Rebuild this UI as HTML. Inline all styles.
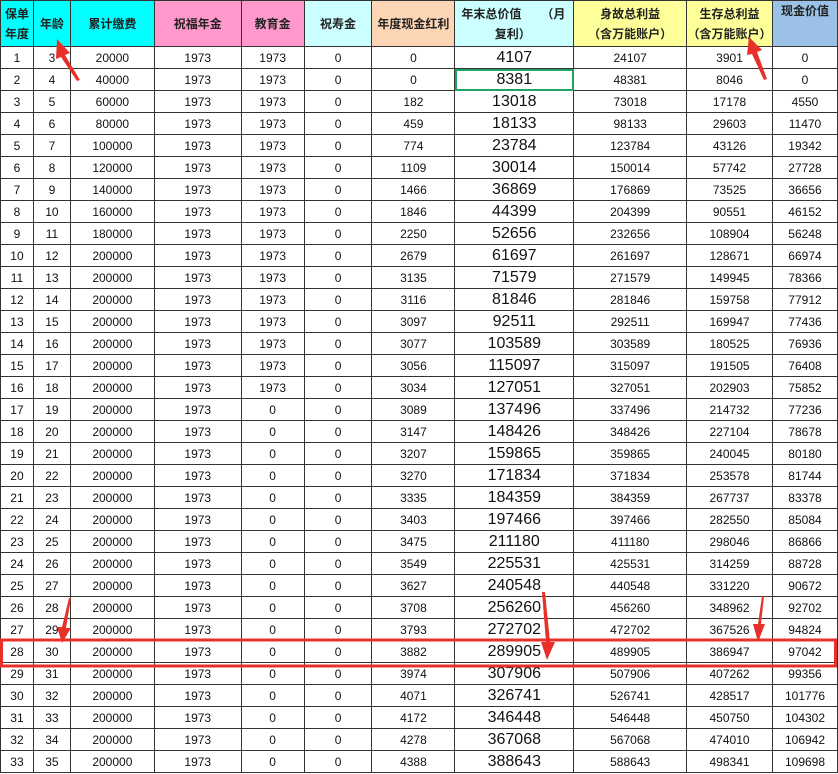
<!DOCTYPE html>
<html><head><meta charset="utf-8"><style>
body{margin:0;width:838px;height:774px;overflow:hidden;background:#fff;font-family:"Liberation Sans","Noto Sans CJK SC",sans-serif;position:relative}
table{border-collapse:collapse;table-layout:fixed;position:absolute;left:0;top:0}
td{border:1px solid #333;height:21px;padding:0;text-align:center;font-size:12px;color:#111;white-space:nowrap;overflow:hidden}
th{border:1px solid #333;height:45px;padding:0;font-size:12px;font-weight:bold;color:#222;line-height:20px}
td.b{font-size:16px}
</style></head><body>
<table>
<colgroup><col style="width:33px"><col style="width:37px"><col style="width:84px"><col style="width:87px"><col style="width:63px"><col style="width:68px"><col style="width:83px"><col style="width:119px"><col style="width:113px"><col style="width:86px"><col style="width:65px"></colgroup>
<tr>
<th style="background:#00ffff">保单<br>年度</th>
<th style="background:#00ffff">年龄</th>
<th style="background:#00ffff">累计缴费</th>
<th style="background:#ff99cc">祝福年金</th>
<th style="background:#ff99cc">教育金</th>
<th style="background:#ccffff">祝寿金</th>
<th style="background:#fcd5b4">年度现金红利</th>
<th style="background:#ccffff;text-align:left;padding-left:6px">年末总价值&nbsp;&nbsp;&nbsp;&nbsp;&nbsp;&nbsp;（月<br>&nbsp;&nbsp;&nbsp;&nbsp;&nbsp;&nbsp;&nbsp;&nbsp;&nbsp;&nbsp;复利）</th>
<th style="background:#ffff99">身故总利益<br>（含万能账户）</th>
<th style="background:#ffff99">生存总利益<br>（含万能账户）</th>
<th style="background:#9bc2e6;vertical-align:top">现金价值</th>
</tr>
<tr><td>1</td><td>3</td><td>20000</td><td>1973</td><td>1973</td><td>0</td><td>0</td><td class="b">4107</td><td>24107</td><td>3901</td><td>0</td></tr>
<tr><td>2</td><td>4</td><td>40000</td><td>1973</td><td>1973</td><td>0</td><td>0</td><td class="b" style="outline:2px solid #21a366;outline-offset:-2px">8381</td><td>48381</td><td>8046</td><td>0</td></tr>
<tr><td>3</td><td>5</td><td>60000</td><td>1973</td><td>1973</td><td>0</td><td>182</td><td class="b">13018</td><td>73018</td><td>17178</td><td>4550</td></tr>
<tr><td>4</td><td>6</td><td>80000</td><td>1973</td><td>1973</td><td>0</td><td>459</td><td class="b">18133</td><td>98133</td><td>29603</td><td>11470</td></tr>
<tr><td>5</td><td>7</td><td>100000</td><td>1973</td><td>1973</td><td>0</td><td>774</td><td class="b">23784</td><td>123784</td><td>43126</td><td>19342</td></tr>
<tr><td>6</td><td>8</td><td>120000</td><td>1973</td><td>1973</td><td>0</td><td>1109</td><td class="b">30014</td><td>150014</td><td>57742</td><td>27728</td></tr>
<tr><td>7</td><td>9</td><td>140000</td><td>1973</td><td>1973</td><td>0</td><td>1466</td><td class="b">36869</td><td>176869</td><td>73525</td><td>36656</td></tr>
<tr><td>8</td><td>10</td><td>160000</td><td>1973</td><td>1973</td><td>0</td><td>1846</td><td class="b">44399</td><td>204399</td><td>90551</td><td>46152</td></tr>
<tr><td>9</td><td>11</td><td>180000</td><td>1973</td><td>1973</td><td>0</td><td>2250</td><td class="b">52656</td><td>232656</td><td>108904</td><td>56248</td></tr>
<tr><td>10</td><td>12</td><td>200000</td><td>1973</td><td>1973</td><td>0</td><td>2679</td><td class="b">61697</td><td>261697</td><td>128671</td><td>66974</td></tr>
<tr><td>11</td><td>13</td><td>200000</td><td>1973</td><td>1973</td><td>0</td><td>3135</td><td class="b">71579</td><td>271579</td><td>149945</td><td>78366</td></tr>
<tr><td>12</td><td>14</td><td>200000</td><td>1973</td><td>1973</td><td>0</td><td>3116</td><td class="b">81846</td><td>281846</td><td>159758</td><td>77912</td></tr>
<tr><td>13</td><td>15</td><td>200000</td><td>1973</td><td>1973</td><td>0</td><td>3097</td><td class="b">92511</td><td>292511</td><td>169947</td><td>77436</td></tr>
<tr><td>14</td><td>16</td><td>200000</td><td>1973</td><td>1973</td><td>0</td><td>3077</td><td class="b">103589</td><td>303589</td><td>180525</td><td>76936</td></tr>
<tr><td>15</td><td>17</td><td>200000</td><td>1973</td><td>1973</td><td>0</td><td>3056</td><td class="b">115097</td><td>315097</td><td>191505</td><td>76408</td></tr>
<tr><td>16</td><td>18</td><td>200000</td><td>1973</td><td>1973</td><td>0</td><td>3034</td><td class="b">127051</td><td>327051</td><td>202903</td><td>75852</td></tr>
<tr><td>17</td><td>19</td><td>200000</td><td>1973</td><td>0</td><td>0</td><td>3089</td><td class="b">137496</td><td>337496</td><td>214732</td><td>77236</td></tr>
<tr><td>18</td><td>20</td><td>200000</td><td>1973</td><td>0</td><td>0</td><td>3147</td><td class="b">148426</td><td>348426</td><td>227104</td><td>78678</td></tr>
<tr><td>19</td><td>21</td><td>200000</td><td>1973</td><td>0</td><td>0</td><td>3207</td><td class="b">159865</td><td>359865</td><td>240045</td><td>80180</td></tr>
<tr><td>20</td><td>22</td><td>200000</td><td>1973</td><td>0</td><td>0</td><td>3270</td><td class="b">171834</td><td>371834</td><td>253578</td><td>81744</td></tr>
<tr><td>21</td><td>23</td><td>200000</td><td>1973</td><td>0</td><td>0</td><td>3335</td><td class="b">184359</td><td>384359</td><td>267737</td><td>83378</td></tr>
<tr><td>22</td><td>24</td><td>200000</td><td>1973</td><td>0</td><td>0</td><td>3403</td><td class="b">197466</td><td>397466</td><td>282550</td><td>85084</td></tr>
<tr><td>23</td><td>25</td><td>200000</td><td>1973</td><td>0</td><td>0</td><td>3475</td><td class="b">211180</td><td>411180</td><td>298046</td><td>86866</td></tr>
<tr><td>24</td><td>26</td><td>200000</td><td>1973</td><td>0</td><td>0</td><td>3549</td><td class="b">225531</td><td>425531</td><td>314259</td><td>88728</td></tr>
<tr><td>25</td><td>27</td><td>200000</td><td>1973</td><td>0</td><td>0</td><td>3627</td><td class="b">240548</td><td>440548</td><td>331220</td><td>90672</td></tr>
<tr><td>26</td><td>28</td><td>200000</td><td>1973</td><td>0</td><td>0</td><td>3708</td><td class="b">256260</td><td>456260</td><td>348962</td><td>92702</td></tr>
<tr><td>27</td><td>29</td><td>200000</td><td>1973</td><td>0</td><td>0</td><td>3793</td><td class="b">272702</td><td>472702</td><td>367526</td><td>94824</td></tr>
<tr><td>28</td><td>30</td><td>200000</td><td>1973</td><td>0</td><td>0</td><td>3882</td><td class="b">289905</td><td>489905</td><td>386947</td><td>97042</td></tr>
<tr><td>29</td><td>31</td><td>200000</td><td>1973</td><td>0</td><td>0</td><td>3974</td><td class="b">307906</td><td>507906</td><td>407262</td><td>99356</td></tr>
<tr><td>30</td><td>32</td><td>200000</td><td>1973</td><td>0</td><td>0</td><td>4071</td><td class="b">326741</td><td>526741</td><td>428517</td><td>101776</td></tr>
<tr><td>31</td><td>33</td><td>200000</td><td>1973</td><td>0</td><td>0</td><td>4172</td><td class="b">346448</td><td>546448</td><td>450750</td><td>104302</td></tr>
<tr><td>32</td><td>34</td><td>200000</td><td>1973</td><td>0</td><td>0</td><td>4278</td><td class="b">367068</td><td>567068</td><td>474010</td><td>106942</td></tr>
<tr><td>33</td><td>35</td><td>200000</td><td>1973</td><td>0</td><td>0</td><td>4388</td><td class="b">388643</td><td>588643</td><td>498341</td><td>109698</td></tr>
</table>
<svg width="838" height="774" style="position:absolute;left:0;top:0">
<rect x="1.5" y="640" width="834" height="26" fill="none" stroke="#e8302a" stroke-width="3"/>
<g fill="#e8302a">
<polygon points="57,39 70,53 65,55 80,80 77,81 61,57 56,59"/>
<polygon points="749,37 762,50 757,52 767,79 764,80 752,54 747,55"/>
<polygon points="62,643 57,627 62,627 69,598 71,598 66,628 71,628"/>
<polygon points="547,660 541,642 546,642 542,592 545,592 550,642 555,642"/>
<polygon points="758,642 753,624 758,624 762,596 764,596 761,624 765,624"/>
</g>
</svg>
</body></html>
